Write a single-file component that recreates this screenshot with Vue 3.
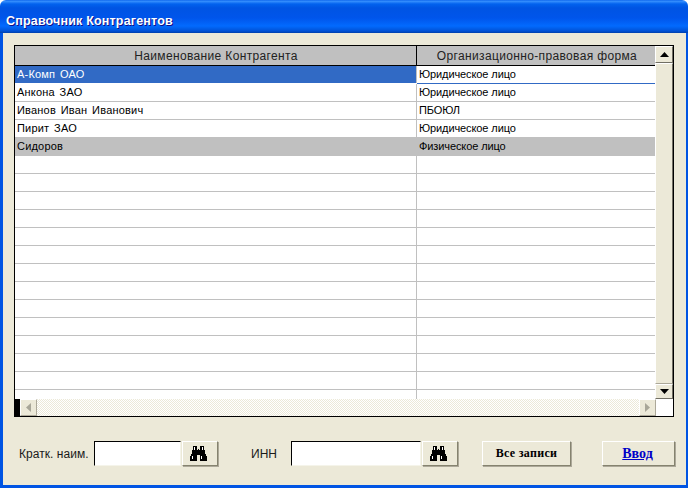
<script setup>
const rows = [
  { name: 'А-Комп ОАО', form: 'Юридическое лицо', state: 'active' },
  { name: 'Анкона ЗАО', form: 'Юридическое лицо' },
  { name: 'Иванов Иван Иванович', form: 'ПБОЮЛ' },
  { name: 'Пирит ЗАО', form: 'Юридическое лицо' },
  { name: 'Сидоров', form: 'Физическое лицо', state: 'grey' },
  ...Array.from({ length: 13 }, () => ({ name: '', form: '' }))
]
</script>

<template>
  <div class="window">
    <div class="titlebar">Справочник Контрагентов</div>
    <div class="body">
      <div class="grid">
        <div class="top">
          <div class="table">
            <div class="row head">
              <div class="c1">Наименование Контрагента</div>
              <div class="c2">Организационно-правовая форма</div>
            </div>
            <div v-for="(r, i) in rows" :key="i" class="row" :class="r.state">
              <div class="c1">{{ r.name }}</div>
              <div class="c2">{{ r.form }}</div>
            </div>
            <div class="row tail">
              <div class="c1"></div>
              <div class="c2"></div>
            </div>
          </div>
          <div class="vscroll">
            <div class="sbtn">
              <svg width="9" height="5" viewBox="0 0 9 5"><path d="M4.5 0 9 5H0z" fill="#000" /></svg>
            </div>
            <div class="thumb"></div>
            <div class="sbtn down">
              <svg width="9" height="5" viewBox="0 0 9 5"><path d="M0 0h9L4.5 5z" fill="#000" /></svg>
            </div>
          </div>
        </div>
        <div class="hscroll">
          <div class="mark"></div>
          <div class="hbtn">
            <svg width="5" height="9" viewBox="0 0 5 9"><path d="M5 0v9L0 4.5z" fill="#a8a698" /></svg>
          </div>
          <div class="track"></div>
          <div class="hbtn">
            <svg width="5" height="9" viewBox="0 0 5 9"><path d="M0 0v9l5-4.5z" fill="#a8a698" /></svg>
          </div>
          <div class="corner"></div>
        </div>
      </div>

      <div class="controls">
        <label class="lbl first">Кратк. наим.</label>
        <input class="field short" type="text" />
        <button class="btn find" type="button">
          <svg width="17" height="15" viewBox="0 0 17 15" shape-rendering="crispEdges">
            <path fill="#000" d="M3 0h4v4h1v-1h1v1h1V0h4v4h1v4h1v2h1v5h-7V9H7v6H0v-5h1V8h1V4h1z" />
            <path fill="#fff" d="M4 1h1v3H4zM12 1h1v3h-1zM2 10h1v3H2zM11 10h1v3h-1z" />
          </svg>
        </button>
        <label class="lbl second">ИНН</label>
        <input class="field long" type="text" />
        <button class="btn find" type="button">
          <svg width="17" height="15" viewBox="0 0 17 15" shape-rendering="crispEdges">
            <path fill="#000" d="M3 0h4v4h1v-1h1v1h1V0h4v4h1v4h1v2h1v5h-7V9H7v6H0v-5h1V8h1V4h1z" />
            <path fill="#fff" d="M4 1h1v3H4zM12 1h1v3h-1zM2 10h1v3H2zM11 10h1v3h-1z" />
          </svg>
        </button>
        <button class="btn all" type="button">Все записи</button>
        <button class="btn enter" type="button">Ввод</button>
      </div>
    </div>
  </div>
</template>

<style scoped>
.window {
  width: 688px;
  height: 488px;
  box-sizing: border-box;
  display: flex;
  flex-direction: column;
  background: #0054e3;
  padding: 0 2px 3px 3px;
  border-radius: 6px 6px 0 0;
  overflow: hidden;
  background-image: linear-gradient(#0058e6 0, #3a93ff 1px, #0262ee 4px, #0054e3 8px, #0055eb 18px, #026afe 26px, #0052d6 31px, #0040ab 33px);
  background-size: 100% 33px;
  background-repeat: no-repeat;
}
.titlebar {
  height: 33px;
  box-sizing: border-box;
  flex: none;
  padding: 13px 0 0 3px;
  color: #fff;
  font: bold 12.5px/16px "Liberation Sans", Arial, sans-serif;
  letter-spacing: 0.18px;
  text-shadow: 1px 1px 0 #0f1089;
}
.body {
  flex: 1;
  min-height: 0;
  background: #ece9d8;
  padding: 12px 0 0 11px;
}
.grid {
  width: 660px;
  height: 372px;
  box-sizing: border-box;
  border: 1px solid #000;
  background: #fff;
  display: flex;
  flex-direction: column;
}
.top {
  display: flex;
  height: 353px;
}
.table {
  width: 640px;
  font: 11px/17px "Liberation Sans", Arial, sans-serif;
  color: #000;
}
.row {
  display: flex;
  height: 18px;
  box-sizing: border-box;
  border-bottom: 1px solid #c0c0c0;
}
.c1 {
  width: 402px;
  box-sizing: border-box;
  padding-left: 2px;
  border-right: 1px solid #c0c0c0;
  white-space: nowrap;
  letter-spacing: 0.2px;
  word-spacing: 1.5px;
}
.c2 {
  width: 238px;
  box-sizing: border-box;
  padding-left: 2px;
  white-space: nowrap;
  letter-spacing: -0.1px;
}
.head {
  height: 20px;
  background: #c0c0c0;
  border-bottom: 1px solid #000;
  font-size: 12px;
  line-height: 21px;
  text-align: center;
  color: #222;
}
.head .c1 {
  border-right: 1px solid #000;
  letter-spacing: 0.35px;
  word-spacing: 0;
  padding-left: 1px;
}
.head .c2 {
  letter-spacing: 0.35px;
  padding: 0 0 0 2px;
}
.active {
  border-bottom-color: #316ac5;
}
.active .c1 {
  background: #316ac5;
  color: #fff;
  border-right-color: #c0c0c0;
  box-shadow: 0 1px 0 #fff;
}
.grey {
  background: #c0c0c0;
}
.tail {
  height: 9px;
  border-bottom: 0;
}
.vscroll {
  width: 18px;
  display: flex;
  flex-direction: column;
  background: #ece9d8;
}
.sbtn {
  height: 17px;
  flex: none;
  box-sizing: border-box;
  background: #ece9d8;
  border: 1px solid;
  border-color: #fff #716f64 #716f64 #fff;
  display: flex;
  align-items: center;
  justify-content: center;
}
.down {
  height: 15px;
}
.thumb {
  flex: 1;
  box-sizing: border-box;
  border: 1px solid;
  border-color: #fff #716f64 #aca899 #fff;
  background: #ece9d8;
}
.hscroll {
  height: 17px;
  display: flex;
  background: repeating-conic-gradient(#fff 0 25%, #ece9d8 0 50%) 0 0 / 2px 2px;
}
.mark {
  width: 5px;
  background: #000;
}
.hbtn {
  width: 17px;
  flex: none;
  box-sizing: border-box;
  background: #ece9d8;
  border: 1px solid;
  border-color: #fff #aca899 #aca899 #fff;
  display: flex;
  align-items: center;
  justify-content: center;
}
.track {
  flex: 1;
}
.corner {
  width: 17px;
  background: #fff;
}
.controls {
  display: flex;
  align-items: center;
  height: 25px;
  margin-top: 24px;
  padding-left: 5px;
  font: 12px "Liberation Sans", Arial, sans-serif;
}
.lbl {
  color: #1a1a1a;
  letter-spacing: 0.05px;
  white-space: nowrap;
}
.first {
  width: 75px;
}
.second {
  width: 40px;
  margin-left: 33px;
  letter-spacing: 0;
}
.field {
  height: 25px;
  box-sizing: border-box;
  padding: 0;
  background: #fff;
  border: 1px solid;
  border-color: #000 #f5f4ea #f5f4ea #000;
  outline: 0;
}
.short {
  width: 87px;
}
.long {
  width: 130px;
}
.btn {
  height: 25px;
  padding: 0;
  box-sizing: border-box;
  background: #ece9d8;
  border: 1px solid;
  border-color: #fff #85836f #85836f #fff;
  box-shadow: 1px 1px 0 #aca899;
  display: flex;
  align-items: center;
  justify-content: center;
  font: bold 12px "Liberation Serif", "Times New Roman", serif;
  color: #000;
}
.find {
  width: 36px;
  margin-left: 1px;
  padding-right: 3px;
}
.all {
  width: 89px;
  margin-left: 24px;
  letter-spacing: 0.3px;
}
.enter {
  width: 73px;
  margin-left: 31px;
  color: #0000c8;
  text-decoration: underline;
  font-size: 14px;
  padding-right: 2px;
}
</style>
